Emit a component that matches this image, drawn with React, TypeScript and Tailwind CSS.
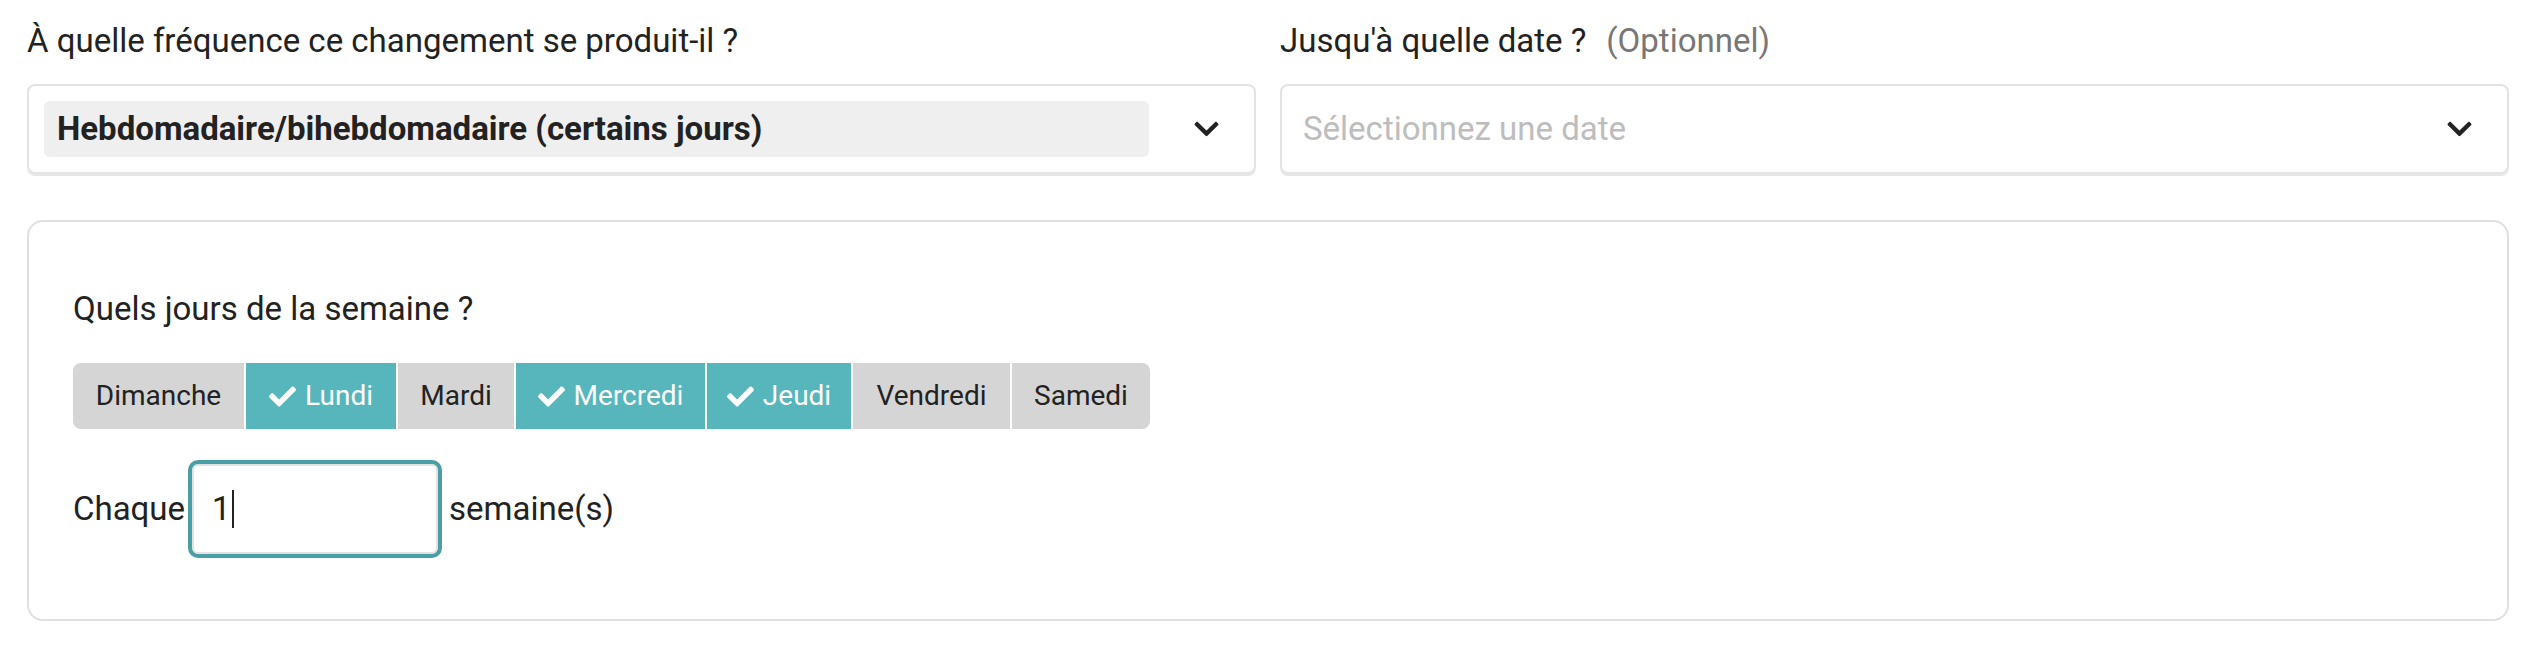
import { FaCheck, FaChevronDown } from "react-icons/fa";

const days = [
  { label: "Dimanche", on: false, w: "w-[171px]", round: "rounded-l-[8px]" },
  { label: "Lundi", on: true, w: "w-[150px]", round: "" },
  { label: "Mardi", on: false, w: "w-[116px]", round: "" },
  { label: "Mercredi", on: true, w: "w-[189px]", round: "" },
  { label: "Jeudi", on: true, w: "w-[144px]", round: "" },
  { label: "Vendredi", on: false, w: "w-[157px]", round: "" },
  { label: "Samedi", on: false, w: "w-[138px]", round: "rounded-r-[8px]" },
];

export default function App() {
  return (
    <div
      className="w-full h-[650px] bg-white pl-[27px] pr-[19px] pt-[17px] text-[#222] text-[33px] leading-[48px]"
      style={{ fontFamily: "Roboto, 'Noto Sans', sans-serif" }}
    >
      {/* Frequency + end date */}
      <div className="grid grid-cols-2 gap-x-[24px]">
        <div>
          <div>À quelle fréquence ce changement se produit-il ?</div>
          <div className="mt-[19px] h-[90px] border-2 border-[#e3e3e3] rounded-[8px] shadow-[0_2px_0_#e6e6e6] flex items-center pl-[15px] pr-[35px]">
            <div className="flex-1 h-[56px] bg-[#efefef] rounded-[6px] px-[13px] flex items-center font-bold">
              Hebdomadaire/bihebdomadaire (certains jours)
            </div>
            <FaChevronDown className="ml-[45px] w-[25px] h-[28px] text-[#222]" />
          </div>
        </div>
        <div>
          <div className="flex">
            <span>Jusqu'à quelle date ?</span>
            <span className="ml-[20px] text-[#777]">(Optionnel)</span>
          </div>
          <div className="mt-[19px] h-[90px] border-2 border-[#e3e3e3] rounded-[8px] shadow-[0_2px_0_#e6e6e6] flex items-center justify-between pl-[21px] pr-[35px]">
            <span className="text-[#bdbdbd]">Sélectionnez une date</span>
            <FaChevronDown className="w-[25px] h-[28px] text-[#222]" />
          </div>
        </div>
      </div>

      {/* Weekly options card */}
      <div className="mt-[46px] border-2 border-[#e0e0e0] rounded-[16px] pl-[44px] pt-[63px] pb-[61px]">
        <div>Quels jours de la semaine ?</div>
        <div className="mt-[30px] flex gap-[2px] h-[66px] text-[28px]">
          {days.map((d) => (
            <div
              key={d.label}
              className={`${d.w} ${d.round} flex items-center justify-center gap-[9px] ${
                d.on ? "bg-[#56b6bc] text-white" : "bg-[#d5d5d5] text-[#222]"
              }`}
            >
              {d.on && <FaCheck className="w-[27px] h-[27px]" />}
              <span>{d.label}</span>
            </div>
          ))}
        </div>
        <div className="mt-[31px] flex items-center">
          <span>Chaque</span>
          <div className="ml-[3px] w-[254px] h-[98px] border-4 border-[#4a9fa4] rounded-[10px] shadow-[inset_0_0_0_2px_#e2e2e2] flex items-center pl-[20px]">
            <span>1</span>
            <span className="w-[2px] h-[38px] bg-[#222] ml-[1px]" />
          </div>
          <span className="ml-[7px]">semaine(s)</span>
        </div>
      </div>
    </div>
  );
}
